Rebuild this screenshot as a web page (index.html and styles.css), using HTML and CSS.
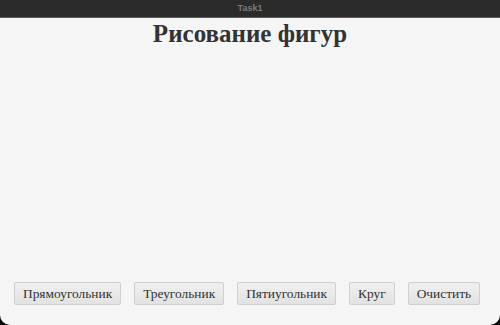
FILE: index.html
```html
<!DOCTYPE html>
<html lang="ru">
<head>
    <meta charset="UTF-8">
    <meta name="viewport" content="width=device-width, initial-scale=1.0">
    <title>Task1</title>
    <link rel="stylesheet" href="styles.css">
</head>
<body>
    <div class="window">
        <!-- Заголовок окна -->
        <div class="title-bar">Task1</div>

        <div class="content">
            <h1>Рисование фигур</h1>
            <div class="canvas"></div>
            <div class="buttons">
                <button>Прямоугольник</button>
                <button>Треугольник</button>
                <button>Пятиугольник</button>
                <button>Круг</button>
                <button>Очистить</button>
            </div>
        </div>
    </div>
</body>
</html>
```

FILE: styles.css
```css
body {
    margin: 0;
    height: 100vh;
    background-color: #000;
    font-family: 'Liberation Serif', 'Times New Roman', serif;
    overflow: hidden;
}

.window {
    height: 100%;
    display: flex;
    flex-direction: column;
    background-color: #f5f5f5;
    border-radius: 0 0 10px 10px;
    overflow: hidden;
}

.title-bar {
    height: 18px;
    flex-shrink: 0;
    background-color: #2b2b2b;
    border-bottom: 1px solid #5a5a5a;
    box-sizing: border-box;
    color: #7a7a7a;
    font-family: 'Liberation Sans', Arial, sans-serif;
    font-size: 9px;
    font-weight: bold;
    line-height: 17px;
    text-align: center;
}

.content {
    flex: 1;
    display: flex;
    flex-direction: column;
    padding: 0 14px 20px;
}

.content h1 {
    margin: 0;
    padding-top: 2px;
    font-size: 25px;
    line-height: 28px;
    color: #333;
    text-align: center;
}

.canvas {
    flex: 1;
}

.buttons {
    display: flex;
    gap: 13px;
}

.buttons button {
    height: 23px;
    padding: 0 8px;
    font-family: 'Liberation Serif', 'Times New Roman', serif;
    font-size: 13.4px;
    color: #333;
    background: linear-gradient(#f0f0f0, #e2e2e2);
    border: 1px solid #cfcfcf;
    border-radius: 2px;
}
```
